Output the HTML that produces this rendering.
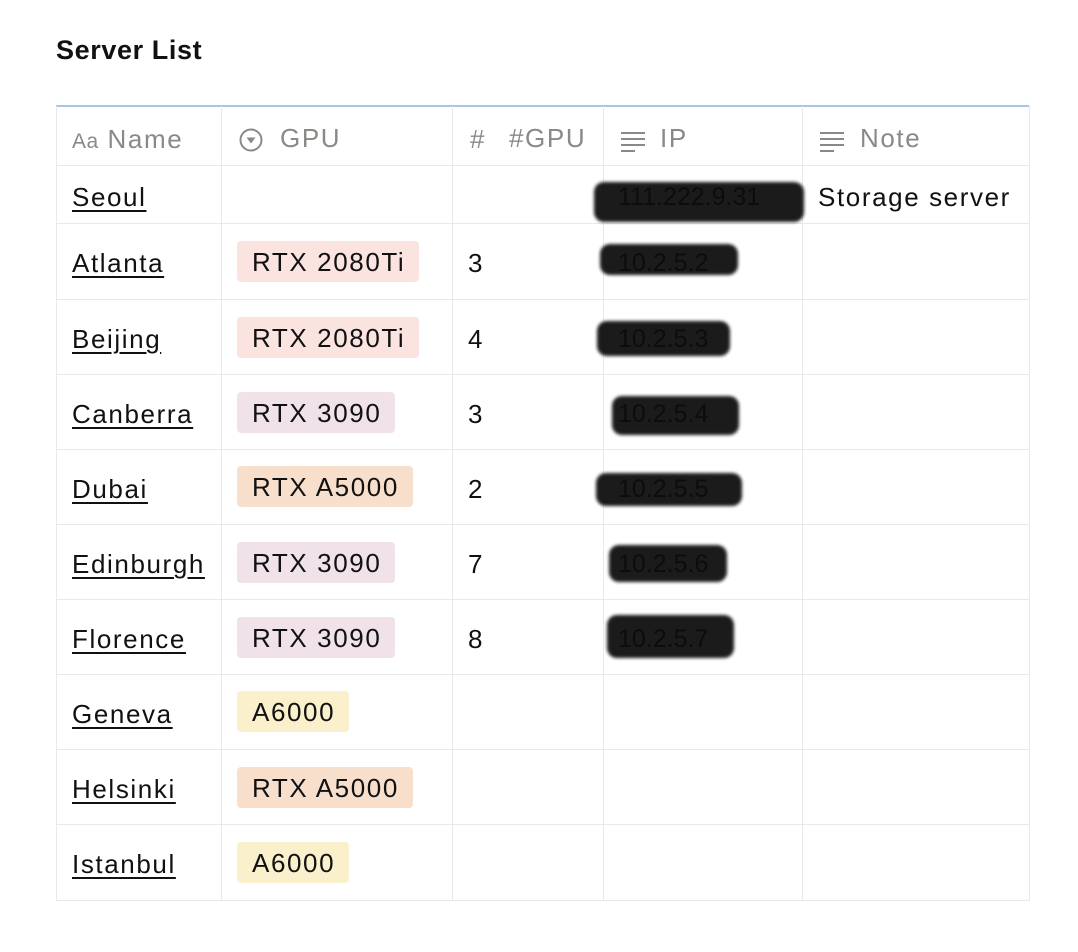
<!DOCTYPE html>
<html><head><meta charset="utf-8"><style>
body{margin:0;background:#fff;width:1078px;height:952px;position:relative;overflow:hidden;font-family:"Liberation Sans",Arial,sans-serif;color:#111}
.a{position:absolute}
.t{font-size:26px;line-height:30px;white-space:nowrap;letter-spacing:1.6px}
.h{color:#8a8986}
.n{text-decoration:underline;text-decoration-thickness:1.5px;text-underline-offset:4px}
.tag{position:absolute;height:41px;border-radius:4px;font-size:26px;letter-spacing:1.6px;line-height:42px;padding:0 14px 0 15px;box-sizing:border-box;white-space:nowrap}
.vl{position:absolute;top:106px;height:795px;width:1px;background:#e9e9e7}
.hl{position:absolute;left:56px;width:973px;height:1px;background:#e9e9e7}
.blob{position:absolute;background:#0a0a0a;border-radius:10px;filter:blur(1.5px);opacity:.93}
.ip{position:absolute;font-size:25px;color:#333;line-height:30px}
</style></head><body>
<div class="a" style="left:56px;top:34px;font-size:27px;letter-spacing:0.6px;font-weight:bold;line-height:32px">Server List</div>
<div class="a" style="left:56px;top:105px;width:973px;height:2px;background:#a9c5e3"></div>
<div class="vl" style="left:56px"></div><div class="vl" style="left:221px"></div><div class="vl" style="left:452px"></div><div class="vl" style="left:603px"></div><div class="vl" style="left:802px"></div><div class="vl" style="left:1029px"></div>
<div class="hl" style="top:165px"></div><div class="hl" style="top:223px"></div><div class="hl" style="top:299px"></div><div class="hl" style="top:374px"></div><div class="hl" style="top:449px"></div><div class="hl" style="top:524px"></div><div class="hl" style="top:599px"></div><div class="hl" style="top:674px"></div><div class="hl" style="top:749px"></div><div class="hl" style="top:824px"></div><div class="hl" style="top:900px"></div>

<div class="a t h" style="left:72px;top:124px"><span style="font-size:21px;letter-spacing:0.5px">Aa</span> Name</div>
<svg class="a" style="left:238px;top:127px" width="26" height="26" viewBox="0 0 26 26"><circle cx="13" cy="13" r="10.5" fill="none" stroke="#8a8986" stroke-width="2"/><path d="M8.5 10.5h9l-4.5 6z" fill="#8a8986"/></svg>
<div class="a t h" style="left:280px;top:123px">GPU</div>
<div class="a t h" style="left:470px;top:124px">#</div>
<div class="a t h" style="left:509px;top:123px">#GPU</div>
<svg class="a" style="left:620px;top:130px" width="26" height="22"><path d="M1 3h24M1 9h24M1 15h24M1 21h14" stroke="#8a8986" stroke-width="2"/></svg>
<div class="a t h" style="left:660px;top:123px">IP</div>
<svg class="a" style="left:819px;top:130px" width="26" height="22"><path d="M1 3h24M1 9h24M1 15h24M1 21h14" stroke="#8a8986" stroke-width="2"/></svg>
<div class="a t h" style="left:860px;top:123px">Note</div>

<div class="a t n" style="left:72px;top:182px">Seoul</div>
<div class="a t" style="left:818px;top:182px">Storage server</div>
<div class="a t n" style="left:72px;top:248px">Atlanta</div>
<div class="a t n" style="left:72px;top:324px">Beijing</div>
<div class="a t n" style="left:72px;top:399px">Canberra</div>
<div class="a t n" style="left:72px;top:474px">Dubai</div>
<div class="a t n" style="left:72px;top:549px">Edinburgh</div>
<div class="a t n" style="left:72px;top:624px">Florence</div>
<div class="a t n" style="left:72px;top:699px">Geneva</div>
<div class="a t n" style="left:72px;top:774px">Helsinki</div>
<div class="a t n" style="left:72px;top:849px">Istanbul</div>

<div class="tag" style="left:237px;top:241px;background:#fbe4e0">RTX 2080Ti</div>
<div class="tag" style="left:237px;top:317px;background:#fbe4e0">RTX 2080Ti</div>
<div class="tag" style="left:237px;top:392px;background:#f1e2ea">RTX 3090</div>
<div class="tag" style="left:237px;top:466px;background:#f8dfcc">RTX A5000</div>
<div class="tag" style="left:237px;top:542px;background:#f1e2ea">RTX 3090</div>
<div class="tag" style="left:237px;top:617px;background:#f1e2ea">RTX 3090</div>
<div class="tag" style="left:237px;top:691px;background:#fbf0cc">A6000</div>
<div class="tag" style="left:237px;top:767px;background:#f8dfcc">RTX A5000</div>
<div class="tag" style="left:237px;top:842px;background:#fbf0cc">A6000</div>

<div class="a t" style="left:468px;top:248px">3</div>
<div class="a t" style="left:468px;top:324px">4</div>
<div class="a t" style="left:468px;top:399px">3</div>
<div class="a t" style="left:468px;top:474px">2</div>
<div class="a t" style="left:468px;top:549px">7</div>
<div class="a t" style="left:468px;top:624px">8</div>

<div class="ip" style="left:618px;top:182px">111.222.9.31</div>
<div class="ip" style="left:618px;top:248px">10.2.5.2</div>
<div class="ip" style="left:618px;top:324px">10.2.5.3</div>
<div class="ip" style="left:618px;top:399px">10.2.5.4</div>
<div class="ip" style="left:618px;top:474px">10.2.5.5</div>
<div class="ip" style="left:618px;top:549px">10.2.5.6</div>
<div class="ip" style="left:618px;top:624px">10.2.5.7</div>
<div class="blob" style="left:594px;top:182px;width:210px;height:40px"></div>
<div class="blob" style="left:600px;top:244px;width:138px;height:31px"></div>
<div class="blob" style="left:597px;top:321px;width:133px;height:35px"></div>
<div class="blob" style="left:612px;top:396px;width:127px;height:39px"></div>
<div class="blob" style="left:596px;top:473px;width:146px;height:33px"></div>
<div class="blob" style="left:609px;top:545px;width:118px;height:37px"></div>
<div class="blob" style="left:607px;top:615px;width:127px;height:43px"></div>
</body></html>
